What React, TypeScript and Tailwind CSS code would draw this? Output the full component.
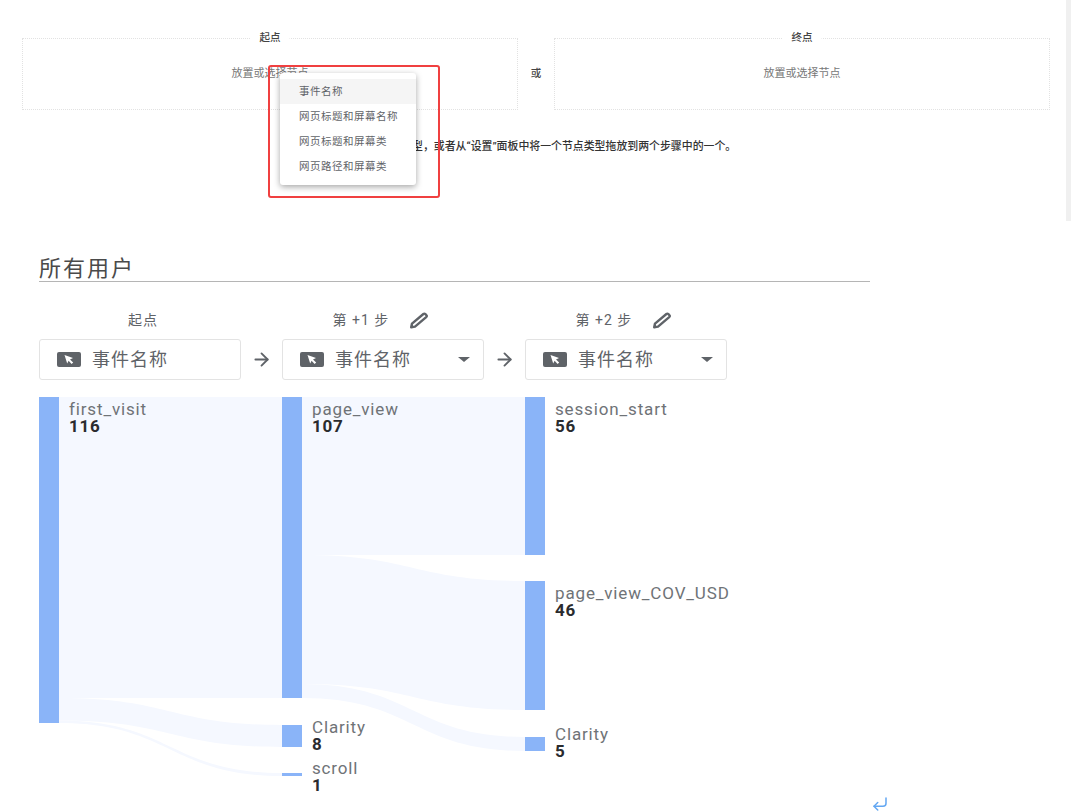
import React from 'react';
import { ArrowRight, CornerDownLeft } from 'lucide-react';

const FONT = "font-['Roboto','Noto_Sans_CJK_SC',sans-serif]";

const menuItems = ['事件名称', '网页标题和屏幕名称', '网页标题和屏幕类', '网页路径和屏幕类'];

const DropZone = ({ title }: { title: string }) => (
    <div className="relative flex h-[72px] w-[496px] items-center justify-center border border-dotted border-[#e2e2e2]">
        <span className="absolute -top-[8px] left-1/2 -translate-x-1/2 bg-white px-[9px] text-[10.5px] leading-[14px] font-medium text-[#444]">
            {title}
        </span>
        <span className="text-[11px] text-[#777]">放置或选择节点</span>
    </div>
);

const CursorBadge = () => (
    <svg width="24" height="15" viewBox="0 0 24 15" className="shrink-0">
        <rect width="24" height="15" rx="2" fill="#5f6368" />
        <path d="M7.5 3 L16 6 L13 7.4 L16.2 10.6 L14.6 12 L11.6 8.8 L10.2 11.6 Z" fill="#fff" />
    </svg>
);

const PencilIcon = () => (
    <svg width="20" height="17" viewBox="0 0 20 17" fill="none" className="shrink-0">
        <path
            d="M2.2 15.2 L3 11.6 L14.4 2 Q15.4 1.2 16.4 2.1 L17.4 3.2 Q18.2 4.2 17.2 5.1 L6 14.6 Z"
            stroke="#5f6368"
            strokeWidth="2.4"
            strokeLinejoin="round"
        />
    </svg>
);

const Step = ({ title, editable, caret }: { title: string; editable?: boolean; caret?: boolean }) => (
    <div className="w-[202px] shrink-0">
        <div
            className={`flex h-4 items-center justify-center gap-[20px] text-[14px] tracking-[1px] text-[#5f6368] ${editable ? '-translate-x-[2px]' : 'translate-x-[3px]'}`}
        >
            <span>{title}</span>
            {editable && <PencilIcon />}
        </div>
        <div className="mt-[11px] flex h-[41px] items-center rounded-[3px] border border-[#e3e3e3] pr-[13px] pl-[17px]">
            <CursorBadge />
            <span className="ml-[11px] text-[18px] tracking-[1px] text-[#5f6368]">事件名称</span>
            {caret && <span className="ml-auto h-0 w-0 border-x-[6px] border-t-[5px] border-x-transparent border-t-[#5f6368]" />}
        </div>
    </div>
);

const StepArrow = () => (
    <div className="flex w-[41px] shrink-0 items-center justify-center pt-[27px]">
        <ArrowRight size={21} strokeWidth={2.1} className="text-[#5f6368]" />
    </div>
);

const link = (x0: number, x1: number, s0: number, s1: number, t0: number, t1: number) => {
    const m = (x0 + x1) / 2;
    return `M${x0} ${s0} C${m} ${s0} ${m} ${t0} ${x1} ${t0} L${x1} ${t1} C${m} ${t1} ${m} ${s1} ${x0} ${s1} Z`;
};

const links = [
    link(59, 282, 397, 698, 397, 698),
    link(59, 282, 698, 720.5, 725, 747),
    link(59, 282, 720.5, 723, 773, 776),
    link(302, 525, 397, 555, 397, 555),
    link(302, 525, 555, 684, 581, 710),
    link(302, 525, 684, 698, 737, 751),
];

const nodes = [
    { x: 39, y: 397, h: 326, name: 'first_visit', value: 116, ty: 414 },
    { x: 282, y: 397, h: 301, name: 'page_view', value: 107, ty: 414 },
    { x: 282, y: 725, h: 22, name: 'Clarity', value: 8, ty: 732 },
    { x: 282, y: 773, h: 3, name: 'scroll', value: 1, ty: 773 },
    { x: 525, y: 397, h: 158, name: 'session_start', value: 56, ty: 414 },
    { x: 525, y: 581, h: 129, name: 'page_view_COV_USD', value: 46, ty: 598 },
    { x: 525, y: 737, h: 14, name: 'Clarity', value: 5, ty: 739 },
];

const Sankey = () => (
    <svg width="1032" height="415" viewBox="39 397 1032 415" className="mt-[17px] block">
        {links.map((d) => (
            <path key={d} d={d} fill="#f5f8ff" />
        ))}
        {nodes.map((n) => (
            <g key={`${n.x}-${n.name}`}>
                <rect x={n.x} y={n.y} width="20" height={n.h} fill="#8ab4f8" />
                <text x={n.x + 30} y={n.ty + 0.5} fontSize="17" letterSpacing="0.85" fill="#6f7377">
                    {n.name}
                </text>
                <text x={n.x + 30} y={n.ty + 17.5} fontSize="17" fontWeight="700" letterSpacing="0.7" fill="#2a2b2e">
                    {n.value}
                </text>
            </g>
        ))}
    </svg>
);

export default function App() {
    return (
        <div className={`relative h-[812px] w-[1071px] overflow-hidden bg-white ${FONT}`}>
            <div className="flex items-center pt-[38px] pl-[22px]">
                <DropZone title="起点" />
                <span className="w-9 text-center text-[10.5px] font-medium text-[#444]">或</span>
                <DropZone title="终点" />
            </div>

            <p className="mt-[30px] w-[1072px] text-center text-[10.9px] leading-[14px] font-medium text-[#333]">
                选择一个节点类型，或者从“设置”面板中将一个节点类型拖放到两个步骤中的一个。
            </p>

            <div className="ml-[39px] w-[831px]">
                <h2 className="mt-[103px] border-b border-[#b5b5b5] text-[22px] leading-[24px] tracking-[2px] text-[#4a4a4a]">
                    所有用户
                </h2>
                <div className="mt-[30px] flex">
                    <Step title="起点" />
                    <StepArrow />
                    <Step title="第 +1 步" editable caret />
                    <StepArrow />
                    <Step title="第 +2 步" editable caret />
                </div>
            </div>

            <div className="ml-[39px]">
                <Sankey />
            </div>

            {/* dropdown opened on the start node, with the red annotation frame round it */}
            <div className="absolute top-[73px] left-[280px] w-[136px] rounded-[3px] bg-white py-[6px] shadow-[0_2px_6px_rgba(0,0,0,0.35)]">
                {menuItems.map((item, i) => (
                    <div
                        key={item}
                        className={`flex h-[25px] items-center pl-[19px] text-[10.5px] tracking-[0.5px] whitespace-nowrap text-[#5f6368] ${i === 0 ? 'bg-[#f5f5f5]' : ''}`}
                    >
                        {item}
                    </div>
                ))}
            </div>
            <div className="absolute top-[65px] left-[268px] h-[133px] w-[172px] rounded-[3px] border-2 border-[#f04040]" />

            <div className="absolute top-0 right-0 h-[221px] w-[5px] bg-[#f0f0f0]" />
            <CornerDownLeft size={18} strokeWidth={2} className="absolute top-[795px] left-[871px] text-[#63a7f2]" />
        </div>
    );
}
